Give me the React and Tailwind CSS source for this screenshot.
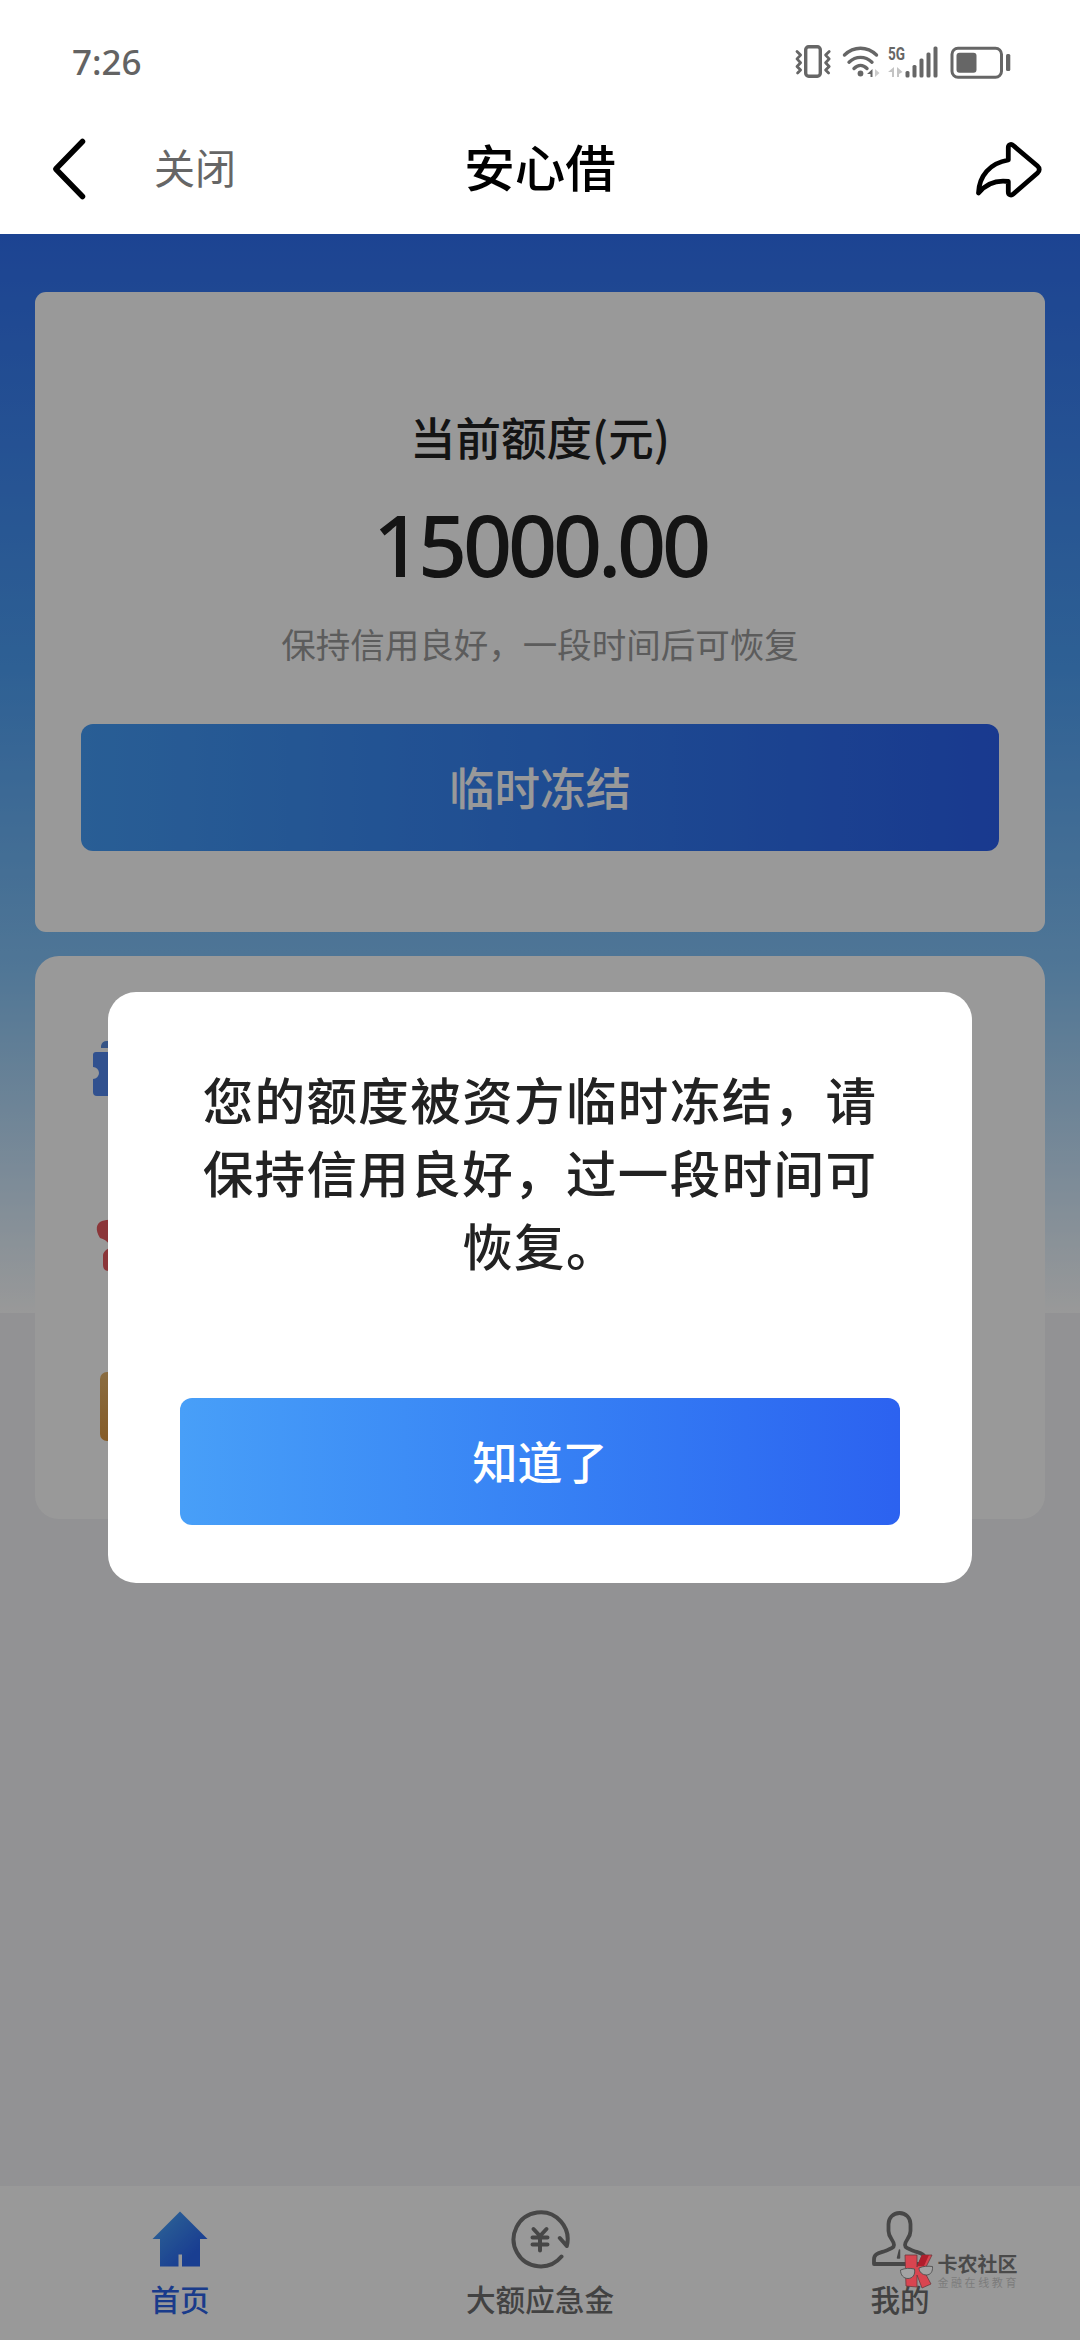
import React, { useState } from "react";

const StatusBar = () => (
  <div className="flex h-[104px] items-center justify-between pt-[18px] pl-[72px] pr-[68px]">
    <span className="text-[35px] leading-none font-medium text-[#636363] font-['Noto_Sans','Noto_Sans_CJK_SC',sans-serif]">
      7:26
    </span>

    <svg width="220" height="40" viewBox="0 0 220 40" fill="none" className="text-[#666]">
      {/* vibrate */}
      <g stroke="currentColor" strokeLinecap="round" strokeLinejoin="round">
        <rect x="13.7" y="5.7" width="14.6" height="29.6" rx="3" strokeWidth="3.4" />
        <path d="M5 10.5l3.6 3.6-3.6 3.8 3.6 3.8L5 25.5l3.6 3.6-3 3" strokeWidth="2.8" />
        <path d="M37.2 10.5l-3.6 3.6 3.6 3.8-3.6 3.8 3.6 3.8-3.6 3.6 3 3" strokeWidth="2.8" />
      </g>

      {/* wifi */}
      <g stroke="currentColor" strokeLinecap="round" strokeWidth="3.4">
        <path d="M52.5 14c9.5-9 22.5-9 32 0" />
        <path d="M57 21.2c7-6.500 16-6.500 23 0" />
        <path d="M62 27.500c4-4 9-4 13 0" />
      </g>
      <circle cx="68.500" cy="32.500" r="2.900" fill="currentColor" />
      <path d="M80.500 28v8h-2v-3h-3.500z" fill="currentColor" />
      <path d="M83 28v8l4.500-4z" fill="#ccc" />

      {/* 5G signal */}
      <text
        x="96"
        y="19"
        fontSize="18"
        fontWeight="700"
        fill="currentColor"
        textLength="17"
        lengthAdjust="spacingAndGlyphs"
        fontFamily="Roboto, sans-serif"
      >
        5G
      </text>
      <path d="M102 26v10h-2v-5h-4zM105 26v10h2v-3l3.500-2z" fill="#c4c4c4" />
      <g fill="currentColor">
        <rect x="113.500" y="30" width="4" height="6.500" rx="1.500" />
        <rect x="120.500" y="24" width="4" height="12.500" rx="1.500" />
        <rect x="127.500" y="17.500" width="4" height="19" rx="1.500" />
        <rect x="134.500" y="11.500" width="4" height="25" rx="1.500" />
        <rect x="141.500" y="5.500" width="4" height="31" rx="1.500" />
      </g>

      {/* battery */}
      <rect x="160" y="7.300" width="49.500" height="29" rx="6" stroke="currentColor" strokeWidth="3" />
      <rect x="164.500" y="11.700" width="20" height="20" rx="3" fill="currentColor" />
      <rect x="214" y="13" width="4.300" height="17" rx="1.500" fill="currentColor" />
    </svg>
  </div>
);

const NavHeader = () => (
  <div className="grid h-[130px] grid-cols-3 items-center px-[38px]">
    <div className="flex items-center">
      <svg width="64" height="64" viewBox="0 0 64 64" fill="none">
        <path
          d="M44.500 4.500L17.800 32l26.700 27.500"
          stroke="#000"
          strokeWidth="5.500"
          strokeLinecap="round"
          strokeLinejoin="round"
        />
      </svg>
      <span className="mb-[5px] ml-[52px] text-[41px] leading-none text-[#666]">关闭</span>
    </div>
    <h1 className="mb-[8px] text-center text-[50.500px] leading-none font-medium text-black">安心借</h1>
    <svg className="mb-[5px] justify-self-end -mr-1" width="70" height="70" viewBox="0 0 70 70" fill="none">
      <path
        d="M2.500 61C3 44 14 31 32.300 28V15.500c0-3 2.800-4 5-2L61.500 34c2.300 2 2.300 5 0 7L37.300 62c-2.200 2-5 1-5-2V49.500C21 48 10 52 2.500 61z"
        stroke="#000"
        strokeWidth="4.800"
        strokeLinejoin="round"
      />
    </svg>
  </div>
);

const QuotaCard = () => (
  <div className="flex h-[640px] flex-col items-center rounded-[11px] bg-white px-[46px] pt-[116px]">
    <p className="text-[45.500px] leading-[56px] font-medium text-[#222]">当前额度(元)</p>
    <p className="mt-[25px] text-[86px] leading-[110px] font-medium tracking-[-4.200px] text-[#222] font-['Noto_Sans','Noto_Sans_CJK_SC',sans-serif]">
      15000.00
    </p>
    <p className="mt-[24px] text-[34.500px] leading-[40px] text-[#999]">
      保持信用良好，一段时间后可恢复
    </p>
    <button className="mt-[61px] h-[127px] w-full rounded-[12px] bg-gradient-to-r from-[#459df8] to-[#2a60ee] pb-[3px] text-[45.500px] font-medium text-white">
      临时冻结
    </button>
  </div>
);

const MenuCard = () => (
  <div className="mt-[24px] flex h-[563px] flex-col rounded-[24px] bg-white pt-[30px] pl-[56px]">
    <div className="flex h-[168px] items-center">
      <svg width="66" height="66" viewBox="0 0 66 66">
        <path d="M10 9a6 6 0 0 1 6-5h34v7H10z" fill="#5a8de0" />
        <path d="M5 15h56a3 3 0 0 1 3 3v12a5 5 0 0 0 0 12v13a4 4 0 0 1-4 4H6a4 4 0 0 1-4-4V42a6 6 0 0 0 0-12V18a3 3 0 0 1 3-3z" fill="#5288ee" />
      </svg>
    </div>
    <div className="flex h-[168px] items-center">
      <svg width="66" height="66" viewBox="0 0 66 66">
        <path d="M11 16c10-3 38-3 44 0 4 3 5 9 2 16-8 1-9 4-9 7l5 8v12c0 5-2 7-6 7H18c-5 0-6-3-6-7V51c0-4 3-6 6-8v-4c-2-3-5-5-9-6-5-8-4-15 2-17z" fill="#e85a60" />
      </svg>
    </div>
    <div className="flex h-[168px] items-center">
      <svg width="70" height="70" viewBox="0 0 70 70">
        <defs>
          <linearGradient id="gold" x1="0" y1="0" x2="0" y2="1">
            <stop offset="0" stopColor="#e5b46c" />
            <stop offset="1" stopColor="#df9a44" />
          </linearGradient>
        </defs>
        <rect x="9" y="1" width="60" height="69" rx="7" fill="url(#gold)" />
      </svg>
    </div>
  </div>
);

const HomeIcon = () => (
  <svg width="60" height="60" viewBox="0 0 60 60">
    <defs>
      <linearGradient id="home" x1="0" y1="0" x2="1" y2="1">
        <stop offset="0.1" stopColor="#4ba4fa" />
        <stop offset="0.75" stopColor="#2b68f2" />
      </linearGradient>
    </defs>
    <path d="M30 2.500L57.500 30H50v27.500H32V45.500h-3.500v12H10V30H2.500z" fill="url(#home)" />
  </svg>
);

const CoinIcon = () => (
  <svg width="60" height="60" viewBox="0 0 60 60" fill="none" stroke="#777" strokeLinecap="round" strokeLinejoin="round">
    <path d="M51.500 47.500A27 27 0 1 1 56.800 37l-7-8" strokeWidth="4" />
    <path d="M23.500 20l6.500 7 6.500-7M22.500 28.500h15M22.500 35.500h15M30 28v13.500" strokeWidth="4" />
  </svg>
);

const UserIcon = () => (
  <svg width="60" height="60" viewBox="0 0 60 60" fill="none" stroke="#777" strokeLinejoin="round">
    <path
      d="M29.500 4C23 4 18.500 9 18.500 15v7c0 7 5.500 9 5.500 14 0 3-4 4-9 6C8 44.500 4 45 4 50.500v4.500h51v-4.500c0-5.500-4-6-11-8.500-5-2-9-3-9-6 0-5 5.500-7 5.500-14v-7C40.500 9 36 4 29.500 4z"
      strokeWidth="3.800"
    />
    <path d="M29.500 41v8h-2z" fill="#777" strokeWidth="1.500" />
  </svg>
);

const tabs = [
  { label: "首页", icon: <HomeIcon />, color: "text-[#2c63e8]" },
  { label: "大额应急金", icon: <CoinIcon />, color: "text-[#6e6e6e]" },
  { label: "我的", icon: <UserIcon />, color: "text-[#6e6e6e]" },
];

const TabBar = () => (
  <nav className="mt-auto grid h-[154px] grid-cols-3 bg-white pt-[23px]">
    {tabs.map((tab) => (
      <div key={tab.label} className="flex flex-col items-center">
        {tab.icon}
        <span className={`mt-[12px] text-[29.600px] leading-[36px] font-medium ${tab.color}`}>{tab.label}</span>
      </div>
    ))}
  </nav>
);

const FreezeDialog = ({ onClose }) => (
  <div className="absolute inset-0 flex items-center justify-center bg-black/40">
    <div className="flex h-[591px] w-[864px] flex-col items-center rounded-[28px] bg-white px-[72px] pt-[70px]">
      <p className="w-[680px] text-center text-[50.500px] leading-[73px] font-medium tracking-[1.400px] text-[#222]">
        您的额度被资方临时冻结，请
        <br />
        保持信用良好，过一段时间可
        <br />
        恢复。
      </p>
      <button
        onClick={onClose}
        className="mt-[117px] h-[127px] w-full rounded-[12px] bg-gradient-to-r from-[#489ff8] to-[#2c62f0] text-[45px] font-medium text-white"
      >
        知道了
      </button>
    </div>
  </div>
);

const Watermark = () => (
  <div className="absolute right-[61px] bottom-[51px] flex items-center gap-[2px]">
    <svg width="36" height="36" viewBox="0 0 36 36">
      <path d="M6 2h12v12l5-12h10l-8 16 7 13-9 4-5-13v12l-11-1z" fill="#d94550" stroke="#6b3a3e" strokeWidth="0.800" />
      <path d="M18 13l5-11h7l-5 11z" fill="#b01e2c" />
      <g fill="#a3a3a3" stroke="#4f4f4f" strokeWidth="0.900">
        <path d="M1.500 17c5-2 9-2 14-1 1 6-2 9.500-6.500 9.500S1.500 22 1.500 17z" />
        <path d="M20 15c4-2 9-2 13.500-1.500.500 5-2 8.500-6 8.500S20 19 20 15z" />
      </g>
    </svg>
    <div className="flex flex-col">
      <span className="text-[20px] leading-[20px] font-bold text-[#4a4a4a]">卡农社区</span>
      <span className="mt-[2px] text-[11px] leading-[12px] tracking-[2.600px] text-[#7c7c7c]">金融在线教育</span>
    </div>
  </div>
);

const App = () => {
  const [open, setOpen] = useState(true);

  return (
    <div className="relative flex h-[2340px] w-[1080px] flex-col overflow-hidden bg-white font-['Noto_Sans_CJK_SC',sans-serif]">
      <header className="h-[234px] shrink-0">
        <StatusBar />
        <NavHeader />
      </header>

      <main className="relative flex flex-1 flex-col bg-[#f4f4f7]">
        <section className="h-[1079px] bg-[linear-gradient(to_bottom,#3071f3_0%,#4da0f7_40%,#85c5fa_68%,#ffffff_100%)] px-[35px] pt-[58px]">
          <QuotaCard />
          <MenuCard />
        </section>
        <TabBar />
        {open && <FreezeDialog onClose={() => setOpen(false)} />}
      </main>

      <Watermark />
    </div>
  );
};

export default App;
